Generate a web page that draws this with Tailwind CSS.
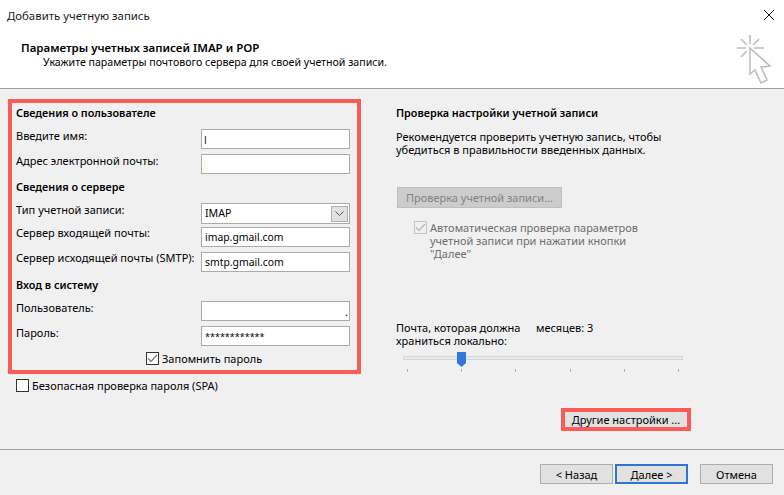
<!DOCTYPE html>
<html lang="ru">
<head>
    <meta charset="UTF-8">
    <title>Добавить учетную запись</title>
    <script src="https://cdn.jsdelivr.net/npm/@tailwindcss/browser@4"></script>
</head>
<body class="bg-[#f0f0f0] font-['Noto_Sans',sans-serif] text-[11px] leading-[13px] text-black">
    <div class="w-[784px] h-[495px] overflow-hidden flex flex-col">
        <!-- Header -->
        <header class="relative h-[89px] shrink-0 bg-white border-b border-[#a0a0a0]">
            <div class="flex items-center justify-between h-[30px] pl-[7px] pr-[10px]">
                <span class="text-[11.4px] text-[#1a1a1a]">Добавить учетную запись</span>
                <svg class="w-[10px] h-[10px]" viewBox="0 0 10 10" fill="none" stroke="#111" stroke-width="1"><path d="M0 0 L10 10 M10 0 L0 10"/></svg>
            </div>
            <div class="pl-[21px] pt-[11px] text-[11.5px] font-semibold">Параметры учетных записей IMAP и POP</div>
            <div class="pl-[43px] pt-[2px] text-[10.6px]">Укажите параметры почтового сервера для своей учетной записи.</div>
            <svg class="absolute left-[737px] top-[34px] w-[34px] h-[50px]" viewBox="0 0 34 50" fill="none" stroke="#bdbdbd" stroke-width="1.6">
                <path d="M13 1 V10 M0 14 H9 M17 14 H27 M4 5 L10 11 M22 5 L16 11 M4 23 L10 17"/>
                <path d="M13 14 L33 32 L24 33 L30 46 L24 49 L18 36 L13 40 Z" fill="#fff"/>
            </svg>
        </header>

        <!-- Main -->
        <main class="h-[360px] shrink-0 flex">
            <section class="w-[396px] shrink-0 pl-[8px] pt-[10px]">
                <div class="w-[353px] h-[275px] border-4 border-[#f85c55] px-[4px] flex flex-col">
                    <h2 class="h-[20px] pb-[2px] flex items-center text-[10.8px] font-semibold">Сведения о пользователе</h2>
                    <div class="mt-[6px] h-[20px] flex items-center justify-between pr-[3px]">
                        <label class="pb-[7px]">Введите имя:</label>
                        <div class="w-[149px] h-[20px] bg-white border border-[#ababab] pl-[2px] flex items-center text-[#3a1020]">l</div>
                    </div>
                    <div class="mt-[5px] h-[20px] flex items-center justify-between pr-[3px]">
                        <label class="pb-[7px]">Адрес электронной почты:</label>
                        <div class="w-[149px] h-[20px] bg-white border border-[#ababab] pl-[2px] flex items-center text-[#f3efb8]">l</div>
                    </div>
                    <h2 class="mt-[3px] h-[20px] pb-[2px] flex items-center text-[10.8px] font-semibold">Сведения о сервере</h2>
                    <div class="mt-[6px] h-[21px] flex items-center justify-between pr-[3px]">
                        <label class="pb-[9px]">Тип учетной записи:</label>
                        <div class="w-[149px] h-[21px] bg-white border border-[#ababab] pl-[3px] pr-[1px] flex items-center justify-between">
                            <span class="text-[10.6px]">IMAP</span>
                            <span class="w-[17px] h-[16px] bg-[#e1e1e1] border border-[#adadad] flex items-center justify-center">
                                <svg class="w-[9px] h-[5px]" viewBox="0 0 9 5" fill="none" stroke="#555" stroke-width="1"><path d="M0.5 0.5 L4.5 4.5 L8.5 0.5"/></svg>
                            </span>
                        </div>
                    </div>
                    <div class="mt-[3px] h-[20px] flex items-center justify-between pr-[3px]">
                        <label class="pb-[9px]">Сервер входящей почты:</label>
                        <div class="w-[149px] h-[20px] bg-white border border-[#ababab] pl-[3px] flex items-center text-[10.4px]">imap.gmail.com</div>
                    </div>
                    <div class="mt-[5px] h-[20px] flex items-center justify-between pr-[3px]">
                        <label class="pb-[9px] whitespace-nowrap">Сервер исходящей почты (SMTP):</label>
                        <div class="w-[149px] h-[20px] bg-white border border-[#ababab] pl-[3px] flex items-center text-[10.4px]">smtp.gmail.com</div>
                    </div>
                    <h2 class="mt-[3px] h-[20px] pb-[2px] flex items-center text-[10.8px] font-semibold">Вход в систему</h2>
                    <div class="mt-[6px] h-[20px] flex items-center justify-between pr-[3px]">
                        <label class="pb-[7px]">Пользователь:</label>
                        <div class="w-[149px] h-[20px] bg-white border border-[#ababab] pr-[1px] flex items-center justify-end">.</div>
                    </div>
                    <div class="mt-[5px] h-[20px] flex items-center justify-between pr-[3px]">
                        <label class="pb-[7px]">Пароль:</label>
                        <div class="w-[149px] h-[20px] bg-white border border-[#ababab] pl-[3px] flex items-center text-[9px]">************</div>
                    </div>
                    <div class="mt-[6px] h-[13px] pl-[130px] flex items-center gap-[3px]">
                        <span class="w-[13px] h-[13px] bg-white border border-[#333] flex items-center justify-center">
                            <svg class="w-[11px] h-[9px]" viewBox="0 0 11 9" fill="none" stroke="#777" stroke-width="1.2"><path d="M1 4.5 L4 7.5 L10 1"/></svg>
                        </span>
                        <span>Запомнить пароль</span>
                    </div>
                </div>
                <div class="mt-[5px] pl-[8px] h-[13px] flex items-center gap-[3px]">
                    <span class="w-[13px] h-[13px] bg-white border border-[#333]"></span>
                    <span>Безопасная проверка пароля (SPA)</span>
                </div>
            </section>

            <section class="w-[300px] shrink-0 pt-[17px]">
                <h2 class="font-semibold text-[10.8px] h-[13px]">Проверка настройки учетной записи</h2>
                <p class="mt-[11px] w-[280px]">Рекомендуется проверить учетную запись, чтобы<br>убедиться в правильности введенных данных.</p>
                <button class="block mt-[31px] ml-[1px] w-[165px] h-[21px] bg-[#cccccc] border border-[#bfbfbf] text-[#838383] text-left pl-[8px]">Проверка учетной записи...</button>
                <div class="mt-[13px] ml-[18px] flex gap-[3px] text-[#6d6d6d]">
                    <span class="w-[13px] h-[13px] shrink-0 border border-[#c4c4c4] flex items-center justify-center">
                        <svg class="w-[11px] h-[9px]" viewBox="0 0 11 9" fill="none" stroke="#b5b5b5" stroke-width="1.2"><path d="M1 4.5 L4 7.5 L10 1"/></svg>
                    </span>
                    <span class="w-[230px]">Автоматическая проверка параметров<br>учетной записи при нажатии кнопки<br>"Далее"</span>
                </div>
                <div class="mt-[61px] flex">
                    <span class="w-[140px]">Почта, которая должна<br>храниться локально:</span>
                    <span>месяцев: 3</span>
                </div>
                <div class="relative mt-[9px] ml-[7px] w-[280px] h-[21px]">
                    <div class="h-[4px] bg-[#e7eaea] border border-[#d6d6d6]"></div>
                    <svg class="absolute left-[54px] top-[-4px] w-[9px] h-[15px]" viewBox="0 0 9 15"><path d="M0 0 H9 V11 L4.5 15 L0 11 Z" fill="#3277d9"/></svg>
                    <div class="mt-[9px] px-[4px] flex justify-between">
                        <i class="w-px h-[3px] bg-[#b0b0b0]"></i>
                        <i class="w-px h-[3px] bg-[#b0b0b0]"></i>
                        <i class="w-px h-[3px] bg-[#b0b0b0]"></i>
                        <i class="w-px h-[3px] bg-[#b0b0b0]"></i>
                        <i class="w-px h-[3px] bg-[#b0b0b0]"></i>
                        <i class="w-px h-[3px] bg-[#b0b0b0]"></i>
                    </div>
                </div>
                <button class="block mt-[31px] ml-[165px] w-[130px] h-[23px] bg-[#e1e1e1] border-4 border-[#f85c55] whitespace-nowrap">Другие настройки ...</button>
            </section>
        </main>

        <!-- Footer -->
        <footer class="flex-1 border-t border-[#a0a0a0] pt-[14px] pl-[540px] flex items-start">
            <button class="w-[73px] h-[20px] bg-[#e1e1e1] border border-[#adadad]">&lt; Назад</button>
            <button class="ml-[2px] w-[73px] h-[20px] bg-[#e1e1e1] border-2 border-[#2f74d0]">Далее &gt;</button>
            <button class="ml-[12px] w-[73px] h-[20px] bg-[#e1e1e1] border border-[#adadad]">Отмена</button>
        </footer>
    </div>
</body>
</html>
